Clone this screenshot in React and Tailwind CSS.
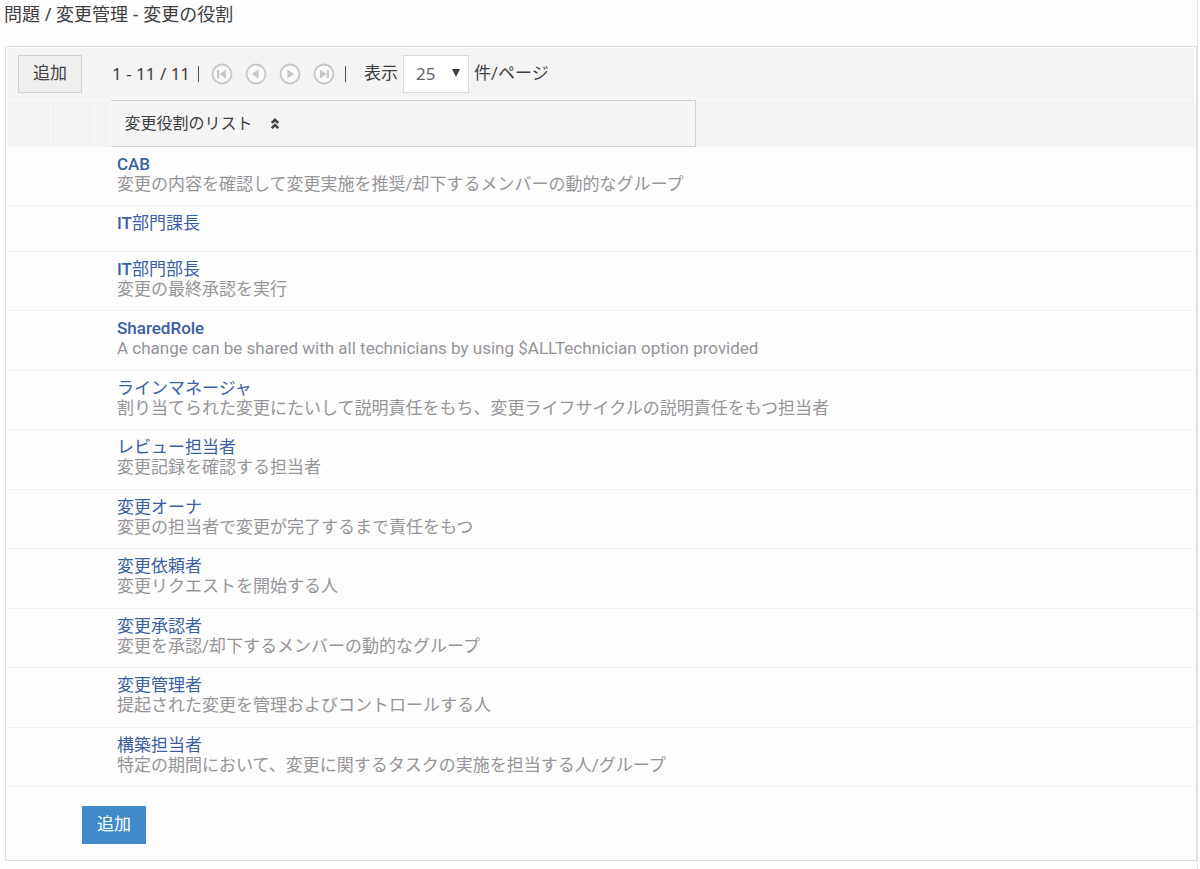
import React from 'react';

const roles = [
  { latin: 'CAB', description: '変更の内容を確認して変更実施を推奨/却下するメンバーの動的なグループ' },
  { latin: 'IT', name: '部門課長' },
  { latin: 'IT', name: '部門部長', description: '変更の最終承認を実行' },
  {
    latin: 'SharedRole',
    description: 'A change can be shared with all technicians by using $ALLTechnician option provided',
  },
  {
    name: 'ラインマネージャ',
    description: '割り当てられた変更にたいして説明責任をもち、変更ライフサイクルの説明責任をもつ担当者',
  },
  { name: 'レビュー担当者', description: '変更記録を確認する担当者' },
  { name: '変更オーナ', description: '変更の担当者で変更が完了するまで責任をもつ' },
  { name: '変更依頼者', description: '変更リクエストを開始する人' },
  { name: '変更承認者', description: '変更を承認/却下するメンバーの動的なグループ' },
  { name: '変更管理者', description: '提起された変更を管理およびコントロールする人' },
  { name: '構築担当者', description: '特定の期間において、変更に関するタスクの実施を担当する人/グループ' },
];

const pagerShapes = {
  first: 'M6 7h2.2v8H6z M15 6.5v9L8.5 11z',
  prev: 'M13.5 6.5v9L7 11z',
  next: 'M8.5 6.5v9L15 11z',
  last: 'M7 6.5v9l6.5-4.5z M13.8 7H16v8h-2.2z',
};

const PagerButton = ({ shape, label }) => (
  <button type="button" aria-label={label} className="text-[#c8c5c6]">
    <svg className="block w-[22px] h-[22px]" viewBox="0 0 22 22">
      <circle cx="11" cy="11" r="9.5" fill="#f9f9f9" stroke="currentColor" strokeWidth="1.8" />
      <path d={pagerShapes[shape]} fill="currentColor" />
    </svg>
  </button>
);

const Toolbar = () => (
  <div className="flex items-center bg-[#f4f4f4] h-[52px] pl-[11px] mt-px mr-px text-[17px] text-[#3f3d40]">
    <button type="button" className="h-[38px] w-16 bg-[#eeeeed] border border-[#d0d0d0]">
      追加
    </button>
    <span className="ml-[30px] font-['Noto_Sans',_'Noto_Sans_CJK_JP',_sans-serif]">1 - 11 / 11</span>
    <span className="ml-2 w-px h-4 bg-[#55504f]" />
    <div className="flex items-center gap-3 ml-3">
      <PagerButton shape="first" label="最初のページ" />
      <PagerButton shape="prev" label="前のページ" />
      <PagerButton shape="next" label="次のページ" />
      <PagerButton shape="last" label="最後のページ" />
    </div>
    <span className="ml-[10px] w-px h-4 bg-[#55504f]" />
    <label htmlFor="page-size" className="ml-[18px]">
      表示
    </label>
    <div className="relative mx-[5px]">
      <select
        id="page-size"
        defaultValue="25"
        className="appearance-none block w-[66px] h-[38px] pl-3 bg-white border border-[#d8d8d8] font-['Noto_Sans',_sans-serif] text-[#66646a]"
      >
        <option>10</option>
        <option>25</option>
        <option>50</option>
        <option>100</option>
      </select>
      <svg className="absolute right-[9px] top-[14px] w-2 h-2 pointer-events-none" viewBox="0 0 8 8">
        <path d="M0 0h8L4 8z" fill="#3f3d40" />
      </svg>
    </div>
    <span>件/ページ</span>
  </div>
);

const RoleRow = ({ latin, name, description }) => (
  <tr className={`align-top border-b border-[#f1f1f1] ${description ? 'h-[59px] even:h-[60px]' : 'h-[46px]'}`}>
    <td />
    <td />
    <td />
    <td colSpan={2} className="pl-[7px] pt-[7px] leading-5">
      <a href="#" className="block text-[#3a5fa3]">
        {latin && <span className="font-medium">{latin}</span>}
        {name}
      </a>
      {description && <p className="text-[#969498]">{description}</p>}
    </td>
  </tr>
);

const RoleTable = () => (
  <table className="w-full table-fixed border-collapse text-[17px]">
    <colgroup>
      <col className="w-[43px]" />
      <col className="w-11" />
      <col className="w-4" />
      <col className="w-[49.3%]" />
      <col />
    </colgroup>
    <thead>
      <tr className="h-[46px] bg-[#f4f4f4] text-[16px] leading-5 text-[#3f3d40]">
        <td className="border-r border-t border-[#fbfbfb]" />
        <td className="border-r border-t border-[#fbfbfb]" />
        <td className="border-r border-t border-[#fbfbfb]" />
        <th className="border border-l-0 border-[#d2d2d2] pl-[14px] text-left font-normal">
          <span className="flex items-center gap-[18px]">
            変更役割のリスト
            <svg className="w-2 h-[11px]" viewBox="0 0 8 11" fill="none" stroke="currentColor" strokeWidth="2.4">
              <path d="M0.8 5L4 1.8L7.2 5M0.8 10.2L4 7L7.2 10.2" />
            </svg>
          </span>
        </th>
        <td className="border-t border-[#fbfbfb]" />
      </tr>
    </thead>
    <tbody>
      {roles.map((role, index) => (
        <RoleRow key={index} {...role} />
      ))}
    </tbody>
  </table>
);

export default function App() {
  return (
    <div className="bg-[#fdfdfd] pr-[2px] font-['Roboto',_'Noto_Sans_CJK_JP',_sans-serif]">
      <div className="min-h-screen border-r border-[#e4e4e4]">
        <h1 className="pl-1 leading-7 text-[18px] text-[#3f3d40] font-['Noto_Sans',_'Noto_Sans_CJK_JP',_sans-serif]">
          問題 / 変更管理 - 変更の役割
        </h1>
        <div className="mt-[18px] ml-[5px] border border-[#e0e0e0] px-px">
          <Toolbar />
          <RoleTable />
          <div className="pt-[19px] pb-4 pl-[75px]">
            <button type="button" className="h-[38px] w-16 bg-[#428bca] text-[17px] text-white">
              追加
            </button>
          </div>
        </div>
      </div>
    </div>
  );
}
